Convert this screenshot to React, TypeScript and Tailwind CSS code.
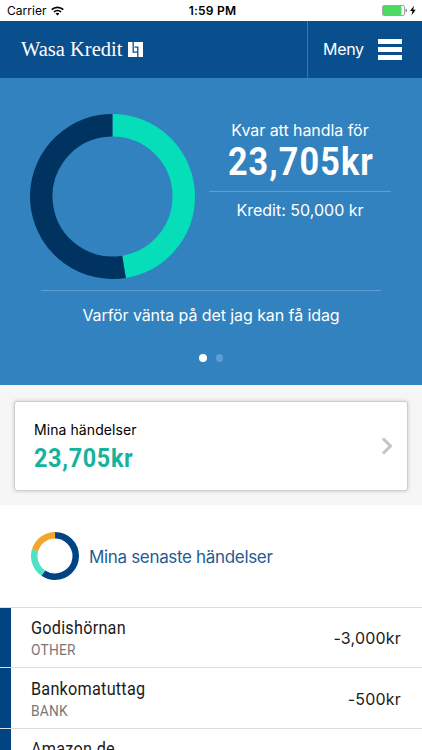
import { clsx } from "clsx";

interface Segment {
  value: number;
  color: string;
}

interface DonutProps {
  size: number;
  thickness: number;
  segments: Segment[];
  className?: string;
}

interface Transaction {
  title: string;
  category?: string;
  amount?: string;
}

const creditSegments: Segment[] = [
  { value: 0.4741, color: "#05deb9" },
  { value: 0.5259, color: "#003360" },
];

const eventSegments: Segment[] = [
  { value: 0.596, color: "#004484" },
  { value: 0.2, color: "#4fe3c4" },
  { value: 0.204, color: "#f5a62a" },
];

const transactions: Transaction[] = [
  { title: "Godishörnan", category: "OTHER", amount: "-3,000kr" },
  { title: "Bankomatuttag", category: "BANK", amount: "-500kr" },
  { title: "Amazon.de" },
];

function Donut({ size, thickness, segments, className }: DonutProps) {
  const c = size / 2;
  const r = (size - thickness) / 2;
  let start = 0;

  return (
    <svg width={size} height={size} viewBox={`0 0 ${size} ${size}`} className={clsx("shrink-0", className)}>
      {segments.map((segment) => {
        const offset = start;
        start += segment.value;
        return (
          <circle
            key={segment.color}
            cx={c}
            cy={c}
            r={r}
            fill="none"
            stroke={segment.color}
            strokeWidth={thickness}
            pathLength={1}
            strokeDasharray={`${segment.value} 1`}
            transform={`rotate(${offset * 360 - 90} ${c} ${c})`}
          />
        );
      })}
    </svg>
  );
}

function StatusBar() {
  return (
    <div className="grid h-[21px] grid-cols-3 items-center bg-white text-black">
      <div className="flex items-center gap-[4px] pl-[7px]">
        <span className="text-[12px] tracking-[0.05px]">Carrier</span>
        <svg width="13" height="10" viewBox="0 0 13 10" fill="none" stroke="#000" strokeWidth="1.7">
          <path d="M0.7 3.7a8.2 8.2 0 0 1 11.6 0" />
          <path d="M2.9 6a5.1 5.1 0 0 1 7.2 0" />
          <path d="M6.5 9.6 4.6 7.6a2.7 2.7 0 0 1 3.8 0z" fill="#000" stroke="none" />
        </svg>
      </div>
      <span className="pl-[3px] text-center text-[12px] font-semibold tracking-[0.25px]">1:59 PM</span>
      <div className="flex items-center justify-end pr-[5px]">
        <svg width="35" height="11" viewBox="0 0 35 11">
          <rect x="0.5" y="0.5" width="22" height="10" rx="1.5" fill="#fff" stroke="#a3a3a3" />
          <rect x="1" y="1" width="18.5" height="9" rx="0.8" fill="#4cd964" />
          <path d="M23.7 3.6c1.6.5 1.6 3.3 0 3.8z" fill="#555" />
          <path d="M32 .8 28 6h2.5l-1.1 4.5 4.3-5.7h-2.5z" fill="#000" />
        </svg>
      </div>
    </div>
  );
}

function Header() {
  return (
    <header className="flex h-[57px] bg-[#0a4f8d] text-white">
      <div className="flex flex-1 items-center gap-[6px] pl-[21px]">
        <span className="font-['Liberation_Serif',serif] text-[20.5px] leading-none whitespace-nowrap">
          Wasa Kredit
        </span>
        <svg width="15" height="15" viewBox="0 0 15 15">
          <rect width="15" height="15" fill="#fff" />
          <path d="M5.2 0v10.2h4.6M9.8 15V5.2H6.6" fill="none" stroke="#0a4f8d" strokeWidth="1.3" />
        </svg>
      </div>
      <button className="flex w-[115px] items-center justify-between border-l border-[#3d78ad] pr-[20px] pl-[15px]">
        <span className="pb-px text-[16px] tracking-[-0.3px]">Meny</span>
        <span className="flex flex-col gap-[3px]">
          <span className="h-[5px] w-[24px] bg-white" />
          <span className="h-[5px] w-[24px] bg-white" />
          <span className="h-[5px] w-[24px] bg-white" />
        </span>
      </button>
    </header>
  );
}

function CreditOverview() {
  return (
    <section className="h-[307px] bg-[#3182bf] text-white">
      <div className="flex h-[212px] pt-9 pl-[30px]">
        <Donut size={165} thickness={22.5} segments={creditSegments} />
        <div className="ml-[14px] w-[182px] pt-[5px] text-center">
          <p className="text-[16px] leading-[22px] tracking-[-0.05px] whitespace-nowrap">Kvar att handla för</p>
          <p className="scale-x-90 pt-px pl-[2px] font-[Roboto,sans-serif] text-[38px] leading-[41px] font-bold tracking-[1.2px] whitespace-nowrap">
            23,705kr
          </p>
          <div className="mt-2 h-px bg-[#5b9fd4]" />
          <p className="mt-[7px] text-[16px] leading-[22px]">Kredit: 50,000 kr</p>
        </div>
      </div>
      <div className="mx-[41px] h-px bg-[#5b9fd4]" />
      <p className="mt-[12px] text-center text-[16px] leading-6 tracking-[-0.08px] whitespace-nowrap">
        Varför vänta på det jag kan få idag
      </p>
      <div className="mt-[27px] flex justify-center gap-[9px]">
        <span className="size-[7.5px] rounded-full bg-white" />
        <span className="size-[7.5px] rounded-full bg-[#5b9fd4]" />
      </div>
    </section>
  );
}

function EventsCard() {
  return (
    <section className="h-[120px] bg-[#f6f6f6] px-[14px] pt-4">
      <div className="flex h-[90px] items-center justify-between rounded-[3px] border border-[#cfcdcd] bg-white pr-[14px] pl-[19px] shadow-[0_0_4px_rgba(0,0,0,0.18)]">
        <div className="pt-[2px]">
          <p className="text-[14px] leading-5 tracking-[0.08px] text-black">Mina händelser</p>
          <p className="origin-left scale-x-90 pt-px font-[Roboto,sans-serif] text-[26px] leading-[34px] font-bold tracking-[0.75px] text-[#16b29c]">
            23,705kr
          </p>
        </div>
        <svg width="12" height="18" viewBox="0 0 12 18" fill="none" stroke="#c3c3c5" strokeWidth="3">
          <path d="M2 1.5 9.5 9 2 16.5" />
        </svg>
      </div>
    </section>
  );
}

function TransactionRow({ title, category, amount }: Transaction) {
  return (
    <li className="flex h-[60.4px] border-t border-[#dcdde0]">
      <div className="w-[10.5px] shrink-0 bg-[#004484]" />
      <div className="flex flex-1 justify-between pr-[21px] pl-5">
        <div className="pt-[8.4px]">
          <p className="origin-left scale-x-90 font-[Roboto,sans-serif] text-[18px] leading-6 tracking-[0.28px] text-[#1b1b1b]">
            {title}
          </p>
          {category && (
            <p className="origin-left scale-x-95 font-[Roboto,sans-serif] text-[14.5px] leading-[21px] tracking-[0.25px] text-[#777]">
              {category}
            </p>
          )}
        </div>
        {amount && <p className="pt-[18.4px] text-[16px] leading-6 tracking-[0.2px] text-[#1b1b1b]">{amount}</p>}
      </div>
    </li>
  );
}

export default function App() {
  return (
    <div className="h-[750px] w-[422px] overflow-hidden bg-white font-[Inter,sans-serif]">
      <StatusBar />
      <Header />
      <CreditOverview />
      <EventsCard />
      <div className="flex h-[102px] items-center gap-[10px] pl-[31px]">
        <Donut size={48} thickness={6.5} segments={eventSegments} />
        <h2 className="pt-[3px] text-[17px] tracking-[-0.33px] text-[#1f5c93]">Mina senaste händelser</h2>
      </div>
      <ul>
        {transactions.map((transaction) => (
          <TransactionRow key={transaction.title} {...transaction} />
        ))}
      </ul>
    </div>
  );
}
